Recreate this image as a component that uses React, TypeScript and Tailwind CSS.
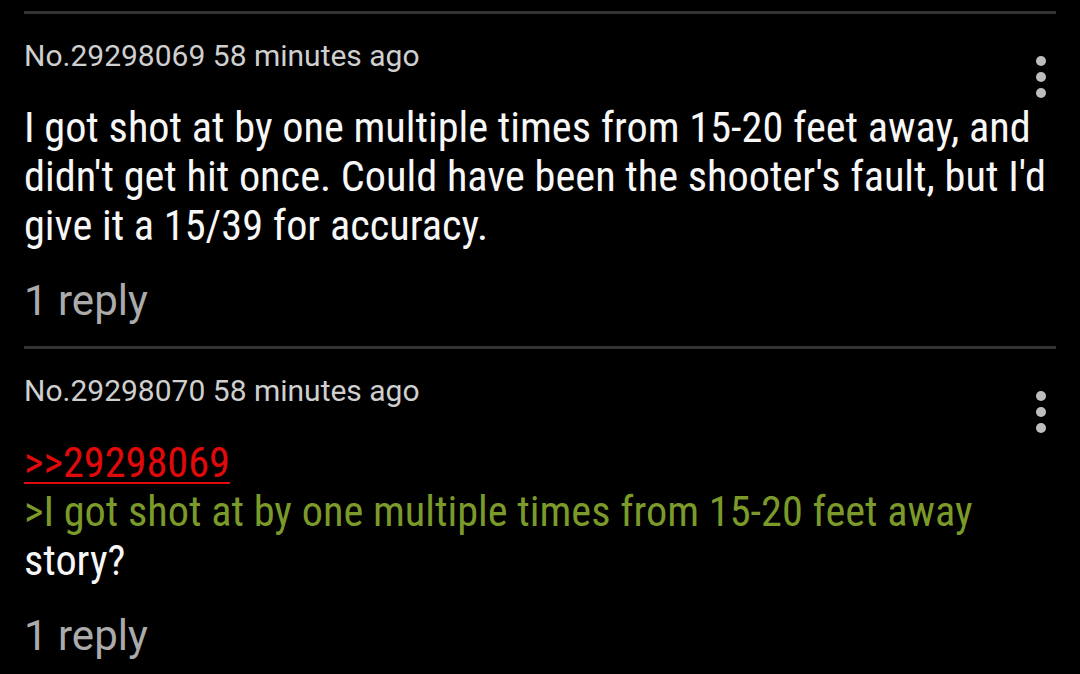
import * as React from "react"

type Line = { text: string; kind: "plain" | "quote" | "link" }

type Post = {
  no: string
  age: string
  lines: Line[]
  replies: number
}

const POSTS: Post[] = [
  {
    no: "29298069",
    age: "58 minutes ago",
    lines: [
      { text: "I got shot at by one multiple times from 15-20 feet away, and", kind: "plain" },
      { text: "didn't get hit once. Could have been the shooter's fault, but I'd", kind: "plain" },
      { text: "give it a 15/39 for accuracy.", kind: "plain" },
    ],
    replies: 1,
  },
  {
    no: "29298070",
    age: "58 minutes ago",
    lines: [
      { text: ">>29298069", kind: "link" },
      { text: ">I got shot at by one multiple times from 15-20 feet away", kind: "quote" },
      { text: "story?", kind: "plain" },
    ],
    replies: 1,
  },
]

const LINE_COLOR: Record<Line["kind"], string> = {
  plain: "text-[#f7f7f7]",
  quote: "text-[#7b9a2a]",
  link: "text-[#e00a0a] underline decoration-2 underline-offset-[5px]",
}

function MoreDots() {
  return (
    <button type="button" aria-label="More" className="absolute right-[34px] top-[56px] flex flex-col items-center gap-[6px] p-0">
      <span className="block h-[10px] w-[10px] rounded-full bg-[#bdbdbd]" />
      <span className="block h-[10px] w-[10px] rounded-full bg-[#bdbdbd]" />
      <span className="block h-[10px] w-[10px] rounded-full bg-[#bdbdbd]" />
    </button>
  )
}

function PostItem({ post }: { post: Post }) {
  return (
    <div className="relative px-6 pt-[11px]">
      <div className="h-[3px] bg-[#323232]" />
      <MoreDots />
      <div className="mt-[24px] text-[30px] leading-[36px] text-[#cfcfcf]">
        No.{post.no} {post.age}
      </div>
      <div className="mt-[29px] font-['Roboto_Condensed',Roboto,sans-serif] text-[42.3px] leading-[49px]">
        {post.lines.map((line, i) => (
          <div key={i} className="whitespace-nowrap">
            <span className={LINE_COLOR[line.kind]}>{line.text}</span>
          </div>
        ))}
      </div>
      <div className="mt-[27px] pb-[10px] text-[42px] leading-[48px] text-[#ababab]">
        {post.replies} {post.replies === 1 ? "reply" : "replies"}
      </div>
    </div>
  )
}

export default function App() {
  return (
    <div className="h-[674px] w-[1080px] overflow-hidden bg-black font-[Roboto,'Noto_Sans',sans-serif]">
      {POSTS.map((p) => (
        <PostItem key={p.no} post={p} />
      ))}
    </div>
  )
}
